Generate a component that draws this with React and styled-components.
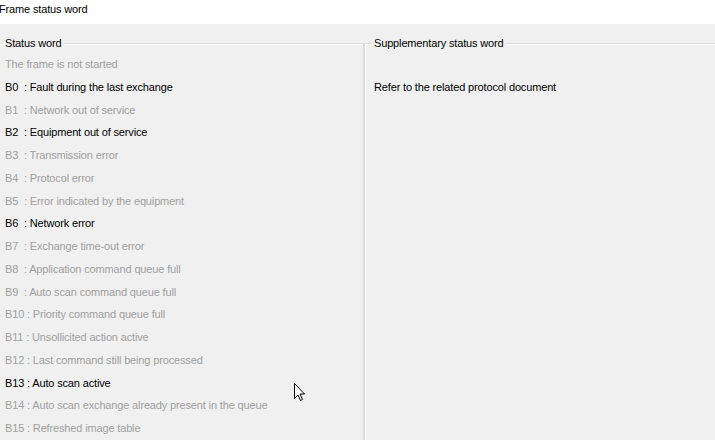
import React from "react";
import styled, { createGlobalStyle } from "styled-components";

const Global = createGlobalStyle`
  html, body { margin: 0; padding: 0; }
  body {
    background: #f0f0f0;
    font-family: "Liberation Sans", Arial, sans-serif;
    font-size: 11px;
    letter-spacing: -0.15px;
    overflow: hidden;
    width: 715px;
    height: 440px;
  }
`;

const Page = styled.div`
  position: relative;
  width: 715px;
  height: 440px;
  overflow: hidden;
`;

const Header = styled.div`
  height: 24px;
  background: #ffffff;
  color: #000;
  padding: 2px 0 0 0;
  box-sizing: border-box;
  line-height: 14px;
  text-indent: -1px;
`;

const Content = styled.div`
  display: grid;
  grid-template-columns: 369px 1fr;
  margin-top: 19px;
  margin-left: -5px;
  margin-right: -20px;
  height: 420px;
`;

const Group = styled.div`
  position: relative;
  border-top: 1px solid #dcdcdc;
  border-left: 1px solid #dcdcdc;
  border-right: 1px solid #dcdcdc;
  box-shadow: inset 1px 1px 0 #ffffff, 1px 0 0 #ffffff;
  padding: 9px 0 0 9px;
`;

const Legend = styled.span`
  position: absolute;
  top: -8px;
  left: 7px;
  padding: 0 2px;
  background: #f0f0f0;
  line-height: 14px;
  color: #000;
`;

const List = styled.div`
  display: flex;
  flex-direction: column;
`;

const Row = styled.div`
  height: 22.75px;
  line-height: 22.75px;
  white-space: pre;
  color: ${(p) => (p.$on ? "#000000" : "#a0a0a0")};
`;

const Cursor = styled.svg`
  position: absolute;
  left: 293px;
  top: 382px;
`;

const items = [
  ["The frame is not started", false],
  ["B0  : Fault during the last exchange", true],
  ["B1  : Network out of service", false],
  ["B2  : Equipment out of service", true],
  ["B3  : Transmission error", false],
  ["B4  : Protocol error", false],
  ["B5  : Error indicated by the equipment", false],
  ["B6  : Network error", true],
  ["B7  : Exchange time-out error", false],
  ["B8  : Application command queue full", false],
  ["B9  : Auto scan command queue full", false],
  ["B10 : Priority command queue full", false],
  ["B11 : Unsollicited action active", false],
  ["B12 : Last command still being processed", false],
  ["B13 : Auto scan active", true],
  ["B14 : Auto scan exchange already present in the queue", false],
  ["B15 : Refreshed image table", false],
];

export default function App() {
  return (
    <Page>
      <Global />
      <Header>Frame status word</Header>
      <Content>
        <Group>
          <Legend>Status word</Legend>
          <List>
            {items.map(([t, on]) => (
              <Row key={t} $on={on}>
                {t}
              </Row>
            ))}
          </List>
        </Group>
        <Group>
          <Legend>Supplementary status word</Legend>
          <List>
            <Row $on>{" "}</Row>
            <Row $on>Refer to the related protocol document</Row>
          </List>
        </Group>
      </Content>
      <Cursor width="14" height="20" viewBox="0 0 14 20">
        <polygon
          points="1.5,1.5 1.5,16.5 5,13 7.5,18.5 9.5,17.5 7,12 11.5,12"
          fill="#ffffff"
          stroke="#000000"
          strokeWidth="1"
          strokeLinejoin="miter"
        />
      </Cursor>
    </Page>
  );
}
